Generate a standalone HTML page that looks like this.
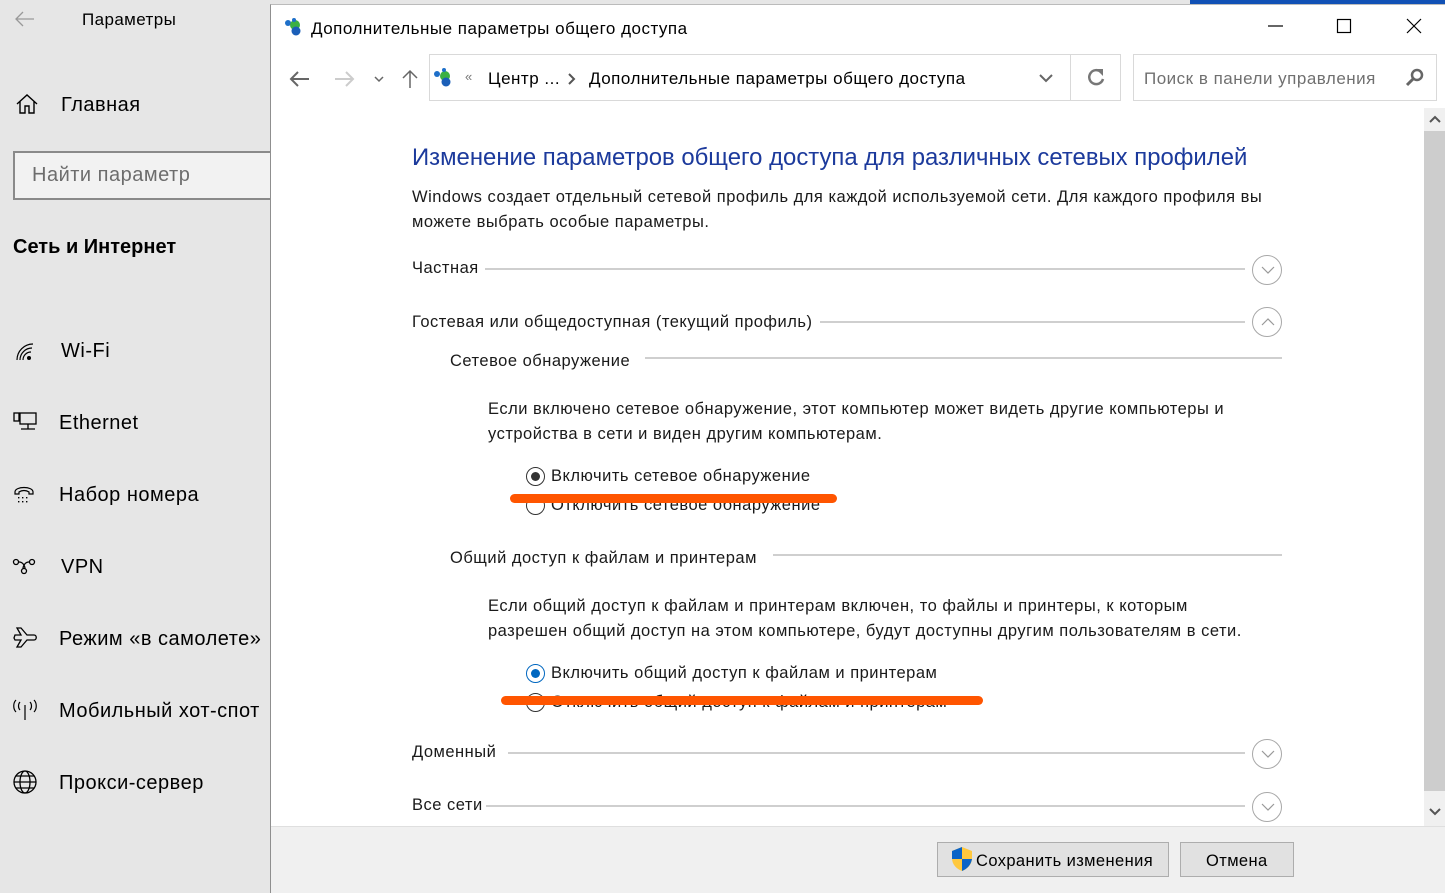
<!DOCTYPE html>
<html><head><meta charset="utf-8"><style>
*{margin:0;padding:0;box-sizing:border-box}
body{width:1445px;height:893px;overflow:hidden;background:#e6e6e6;font-family:"Liberation Sans","DejaVu Sans",sans-serif;position:relative;color:#000}
.a{position:absolute;white-space:nowrap}
.s{font-size:20px;letter-spacing:0.5px;color:#000}
.d{font-size:16.5px;letter-spacing:0.5px;color:#1a1a1a}
.ln{position:absolute;height:2px;background:#cfcfcf}
.circ{position:absolute;width:30px;height:30px;border:1px solid #a8a8a8;border-radius:50%}
.circ svg{position:absolute;left:7px;top:8px}
.rad{position:absolute;width:19px;height:19px;border:1px solid #333;border-radius:50%;background:#fff}
.ic{position:absolute}
</style></head><body>
<div class="a" style="left:1190px;top:0;width:255px;height:4px;background:#1151b5"></div>
<svg class="ic" style="left:14px;top:10px" width="22" height="18"><path d="M20 9H2M9 2L2 9l7 7" stroke="#999" stroke-width="1.3" fill="none"/></svg>
<div class="a" style="left:82px;top:10px;font-size:17px;letter-spacing:0.4px;color:#000">Параметры</div>
<svg class="ic" style="left:15px;top:93px" width="24" height="22"><path d="M2 11L12 2l10 9M5 8v12h5v-7h4v7h5V8" stroke="#000" stroke-width="1.4" fill="none"/></svg>
<div class="a s" style="left:61px;top:94px">Главная</div>
<div class="a" style="left:13px;top:151px;width:270px;height:49px;border:2px solid #8a8a8a;background:#f2f2f2"></div>
<div class="a" style="left:32px;top:164px;font-size:20px;letter-spacing:0.5px;color:#6d6d6d">Найти параметр</div>
<div class="a" style="left:13px;top:236px;font-size:20px;font-weight:bold">Сеть и Интернет</div>
<svg class="ic" style="left:14px;top:340px" width="24" height="22"><g stroke="#000" stroke-width="1.2" fill="none"><path d="M3 20a16 16 0 0 1 16-16"/><path d="M6 20a12 12 0 0 1 12-12"/><path d="M9 20a8 8 0 0 1 8-8"/></g><circle cx="15" cy="18" r="2" fill="#000"/></svg>
<div class="a s" style="left:61px;top:340px">Wi-Fi</div>
<svg class="ic" style="left:12px;top:411px" width="26" height="22"><g stroke="#000" stroke-width="1.3" fill="none"><rect x="8" y="2" width="16" height="11"/><rect x="2" y="2" width="5" height="8"/><path d="M16 13v5M9 18h14"/></g></svg>
<div class="a s" style="left:59px;top:412px">Ethernet</div>
<svg class="ic" style="left:12px;top:484px" width="26" height="20"><g stroke="#000" stroke-width="1.2" fill="none"><path d="M3 8c0-6 18-6 18 0v2h-4V8c-3-2-7-2-10 0v2H3z"/></g><g fill="#000"><rect x="6" y="13" width="1.4" height="1.4"/><rect x="10" y="13" width="1.4" height="1.4"/><rect x="14" y="13" width="1.4" height="1.4"/><rect x="6" y="17" width="1.4" height="1.4"/><rect x="10" y="17" width="1.4" height="1.4"/><rect x="14" y="17" width="1.4" height="1.4"/></g></svg>
<div class="a s" style="left:59px;top:484px">Набор номера</div>
<svg class="ic" style="left:12px;top:556px" width="26" height="20"><g stroke="#000" stroke-width="1.3" fill="none"><circle cx="4" cy="6" r="2.5"/><circle cx="20" cy="6" r="2.5"/><path d="M7 6c4 0 6 4 6 7M17 6c-4 0-6 4-6 7"/><circle cx="12" cy="15" r="2.5"/></g></svg>
<div class="a s" style="left:61px;top:556px">VPN</div>
<svg class="ic" style="left:12px;top:626px" width="28" height="24"><path d="M3 9h6L5 2h4l6 7h7c3 0 3 5 0 5h-7l-6 7H5l4-7H3l-1-2 1-3z" stroke="#000" stroke-width="1.3" fill="none"/></svg>
<div class="a s" style="left:59px;top:628px">Режим «в самолете»</div>
<svg class="ic" style="left:11px;top:698px" width="28" height="24"><g stroke="#000" stroke-width="1.2" fill="none"><path d="M14 7v15"/><path d="M9 4c-2 2-2 6 0 8M19 4c2 2 2 6 0 8M5 2c-3 3-3 9 0 12M23 2c3 3 3 9 0 12"/></g></svg>
<div class="a s" style="left:59px;top:700px">Мобильный хот-спот</div>
<svg class="ic" style="left:12px;top:769px" width="26" height="26"><g stroke="#000" stroke-width="1.3" fill="none"><circle cx="13" cy="13" r="11"/><ellipse cx="13" cy="13" rx="5" ry="11"/><path d="M2 13h22M4 7h18M4 19h18"/></g></svg>
<div class="a s" style="left:59px;top:772px">Прокси-сервер</div>

<div class="a" style="left:270px;top:4px;width:1175px;height:889px;background:#fff;border-left:1px solid #8f8f8f;border-top:1px solid #bbb"></div>
<svg class="ic" style="left:284px;top:17px" width="22" height="20"><circle cx="4" cy="6" r="3" fill="#1e6fc9"/><circle cx="11" cy="8" r="5" fill="#3cb043"/><circle cx="12" cy="14" r="4.5" fill="#1b5fb8"/><circle cx="10" cy="3" r="2" fill="#1e6fc9"/></svg>
<div class="a" style="left:311px;top:19px;font-size:17px;letter-spacing:0.5px">Дополнительные параметры общего доступа</div>
<svg class="ic" style="left:1266px;top:17px" width="170" height="20"><path d="M2 9h15" stroke="#000" stroke-width="1.2"/><rect x="71.5" y="2.5" width="13" height="13" stroke="#000" stroke-width="1.2" fill="none"/><path d="M141 2l14 14M155 2l-14 14" stroke="#000" stroke-width="1.2"/></svg>
<svg class="ic" style="left:288px;top:68px" width="140" height="22"><g stroke-width="2" fill="none"><path d="M21 11H3M10 4l-7 7 7 7" stroke="#666"/><path d="M47 11h18M58 4l7 7-7 7" stroke="#ccc"/><path d="M87 9l4 4 4-4" stroke="#666" stroke-width="1.5"/><path d="M122 20V3M115 10l7-7 7 7" stroke="#666" stroke-width="1.5"/></g></svg>
<div class="a" style="left:429px;top:54px;width:692px;height:47px;border:1px solid #d9d9d9"></div>
<div class="a" style="left:1070px;top:55px;width:1px;height:45px;background:#d9d9d9"></div>
<svg class="ic" style="left:433px;top:66px" width="24" height="22"><circle cx="4" cy="8" r="3" fill="#1e6fc9"/><circle cx="12" cy="10" r="5" fill="#3cb043"/><circle cx="13" cy="16" r="4.5" fill="#1b5fb8"/><circle cx="11" cy="4" r="2" fill="#1e6fc9"/></svg>
<div class="a" style="left:465px;top:69px;font-size:13px;color:#777">«</div>
<div class="a" style="left:488px;top:69px;font-size:17px;letter-spacing:0.5px">Центр ...</div>
<svg class="ic" style="left:567px;top:72px" width="10" height="14"><path d="M2 2l5 5-5 5" stroke="#555" stroke-width="2" fill="none"/></svg>
<div class="a" style="left:589px;top:69px;font-size:17px;letter-spacing:0.5px">Дополнительные параметры общего доступа</div>
<svg class="ic" style="left:1038px;top:72px" width="16" height="12"><path d="M2 3l6 6 6-6" stroke="#666" stroke-width="2" fill="none"/></svg>
<svg class="ic" style="left:1085px;top:67px" width="22" height="22"><path d="M16 5A7 7 0 1 0 18 12" stroke="#777" stroke-width="2.5" fill="none"/><path d="M11 2h7v7z" fill="#777"/></svg>
<div class="a" style="left:1133px;top:54px;width:304px;height:47px;border:1px solid #d9d9d9"></div>
<div class="a" style="left:1144px;top:69px;font-size:17px;letter-spacing:0.5px;color:#707070">Поиск в панели управления</div>
<svg class="ic" style="left:1405px;top:68px" width="20" height="20"><circle cx="12" cy="7" r="5" stroke="#666" stroke-width="2.5" fill="none"/><path d="M8 11l-6 6" stroke="#666" stroke-width="3"/></svg>
<div class="a" style="left:1424px;top:108px;width:21px;height:718px;background:#f0f0f0"></div>
<div class="a" style="left:1424px;top:131px;width:21px;height:660px;background:#cdcdcd"></div>
<svg class="ic" style="left:1428px;top:114px" width="14" height="12"><path d="M2 8l5-5 5 5" stroke="#555" stroke-width="2" fill="none"/></svg>
<svg class="ic" style="left:1428px;top:806px" width="14" height="12"><path d="M2 3l5 5 5-5" stroke="#555" stroke-width="2" fill="none"/></svg>

<div class="a" style="left:412px;top:144px;font-size:23.9px;color:#1c3a9c">Изменение параметров общего доступа для различных сетевых профилей</div>
<div class="a d" style="left:412px;top:188px">Windows создает отдельный сетевой профиль для каждой используемой сети. Для каждого профиля вы</div>
<div class="a d" style="left:412px;top:213px">можете выбрать особые параметры.</div>

<div class="a d" style="left:412px;top:259px">Частная</div>
<div class="ln" style="left:485px;top:268px;width:760px"></div>
<div class="circ" style="left:1252px;top:255px"><svg width="16" height="12"><path d="M2 3l6 6 6-6" stroke="#999" stroke-width="1.2" fill="none"/></svg></div>

<div class="a d" style="left:412px;top:313px">Гостевая или общедоступная (текущий профиль)</div>
<div class="ln" style="left:820px;top:321px;width:425px"></div>
<div class="circ" style="left:1252px;top:307px"><svg width="16" height="12"><path d="M2 9l6-6 6 6" stroke="#999" stroke-width="1.2" fill="none"/></svg></div>

<div class="a d" style="left:450px;top:352px">Сетевое обнаружение</div>
<div class="ln" style="left:645px;top:357px;width:637px"></div>
<div class="a d" style="left:488px;top:400px">Если включено сетевое обнаружение, этот компьютер может видеть другие компьютеры и</div>
<div class="a d" style="left:488px;top:425px">устройства в сети и виден другим компьютерам.</div>
<div class="rad" style="left:526px;top:467px"><div style="position:absolute;left:4px;top:4px;width:9px;height:9px;border-radius:50%;background:#333"></div></div>
<div class="a d" style="left:551px;top:467px">Включить сетевое обнаружение</div>
<div class="rad" style="left:526px;top:496px"></div>
<div class="a d" style="left:551px;top:496px">Отключить сетевое обнаружение</div>
<div class="a" style="left:510px;top:494px;width:327px;height:9px;border-radius:5px;background:#ff5500"></div>

<div class="a d" style="left:450px;top:549px">Общий доступ к файлам и принтерам</div>
<div class="ln" style="left:773px;top:554px;width:509px"></div>
<div class="a d" style="left:488px;top:597px">Если общий доступ к файлам и принтерам включен, то файлы и принтеры, к которым</div>
<div class="a d" style="left:488px;top:622px">разрешен общий доступ на этом компьютере, будут доступны другим пользователям в сети.</div>
<div class="rad" style="left:526px;top:664px;border-color:#0067c0"><div style="position:absolute;left:4px;top:4px;width:9px;height:9px;border-radius:50%;background:#0067c0"></div></div>
<div class="a d" style="left:551px;top:664px">Включить общий доступ к файлам и принтерам</div>
<div class="rad" style="left:526px;top:693px"></div>
<div class="a d" style="left:551px;top:693px">Отключить общий доступ к файлам и принтерам</div>
<div class="a" style="left:501px;top:696px;width:482px;height:9px;border-radius:5px;background:#ff5500"></div>

<div class="a d" style="left:412px;top:743px">Доменный</div>
<div class="ln" style="left:508px;top:752px;width:737px"></div>
<div class="circ" style="left:1252px;top:739px"><svg width="16" height="12"><path d="M2 3l6 6 6-6" stroke="#999" stroke-width="1.2" fill="none"/></svg></div>
<div class="a d" style="left:412px;top:796px">Все сети</div>
<div class="ln" style="left:486px;top:805px;width:759px"></div>
<div class="circ" style="left:1252px;top:792px"><svg width="16" height="12"><path d="M2 3l6 6 6-6" stroke="#999" stroke-width="1.2" fill="none"/></svg></div>

<div class="a" style="left:271px;top:826px;width:1174px;height:67px;background:#f0f0f0;border-top:1px solid #dfdfdf"></div>
<div class="a" style="left:937px;top:842px;width:232px;height:35px;background:#e1e1e1;border:1px solid #adadad"></div>
<svg class="ic" style="left:950px;top:846px" width="24" height="26"><path d="M12 1l10 4v7c0 7-5 11-10 13C7 23 2 19 2 12V5z" fill="#ffc83d"/><path d="M12 1v12H2V5z" fill="#0a64c8"/><path d="M12 13h10c-1 6-5 10-10 12z" fill="#0a64c8"/></svg>
<div class="a" style="left:976px;top:852px;font-size:16.5px;letter-spacing:0.4px">Сохранить изменения</div>
<div class="a" style="left:1180px;top:842px;width:114px;height:35px;background:#e1e1e1;border:1px solid #adadad"></div>
<div class="a" style="left:1206px;top:852px;font-size:16.5px;letter-spacing:0.4px">Отмена</div>
</body></html>
